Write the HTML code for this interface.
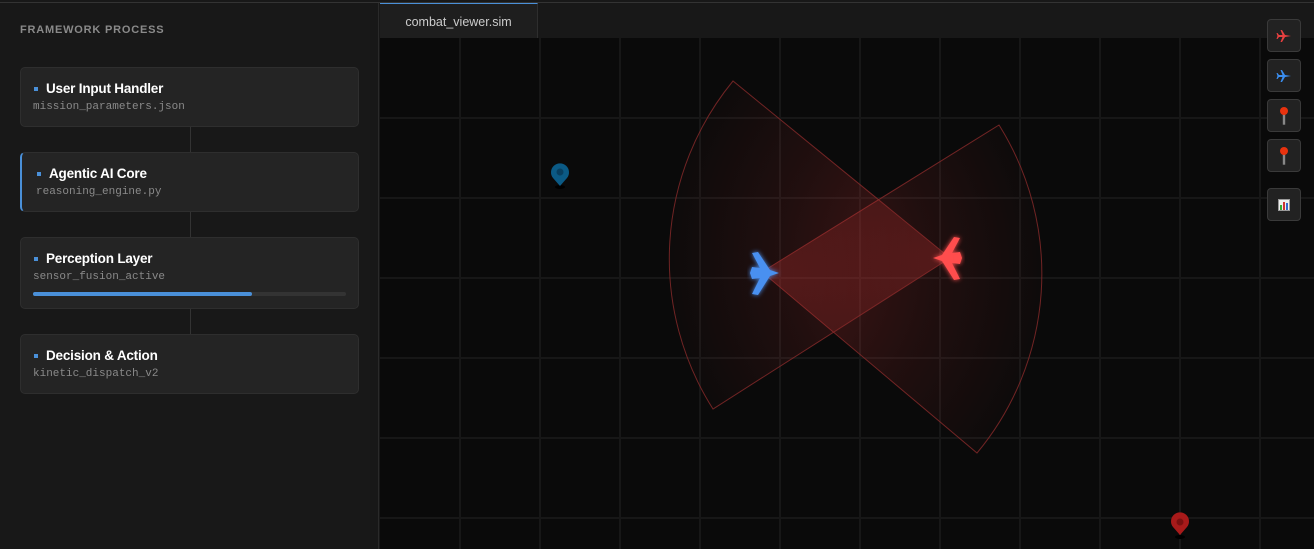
<!DOCTYPE html>
<html><head><meta charset="utf-8"><style>
*{margin:0;padding:0;box-sizing:border-box}
body{width:1314px;height:549px;background:#181818;font-family:"Liberation Sans",sans-serif;overflow:hidden;position:relative}
.top{position:absolute;left:0;top:0;width:1314px;height:3px;background:#181818;border-bottom:1px solid #333}
.side{position:absolute;left:0;top:3px;width:379px;height:546px;background:#181818;border-right:1px solid #2a2a2a}
.h{position:absolute;left:20px;top:21px;font-size:11px;font-weight:bold;letter-spacing:0.8px;color:#8a8a8a}
.card{position:absolute;left:20px;width:339px;background:#242424;border:1px solid #2e2e2e;border-radius:5px}
.card .t{position:absolute;left:25px;top:13px;font-size:13.5px;font-weight:bold;color:#fff;letter-spacing:-0.2px}
.card .t:before{content:"";position:absolute;left:-12px;top:6px;width:4px;height:4px;background:#4a90d9}
.card .s{position:absolute;left:12px;top:33px;font-family:"Liberation Mono",monospace;font-size:11px;color:#8a8a8a}
.conn{position:absolute;left:190px;width:1px;background:#333}
.map{position:absolute;left:380px;top:38px;width:934px;height:511px;background:#0a0a0a}
.tabbar{position:absolute;left:380px;top:3px;width:934px;height:35px;background:#181818}
.tab{position:absolute;left:380px;top:3px;width:158px;height:35px;background:#1e1e1e;border-top:1px solid #4a90d9;border-right:1px solid #2e2e2e;color:#ccc;font-size:12.5px;text-align:center;line-height:36px}
.btn{position:absolute;left:1267px;width:34px;height:33px;background:#222;border:1px solid #3a3a3a;border-radius:4px;display:flex;align-items:center;justify-content:center}
</style></head><body>
<div class="top"></div>
<div class="side">
<div class="h">FRAMEWORK PROCESS</div>
</div>
<div class="card" style="top:67px;height:60px"><div class="t">User Input Handler</div><div class="s">mission_parameters.json</div></div>
<div class="conn" style="top:127px;height:25px"></div>
<div class="card" style="top:152px;height:60px;border-left:2px solid #4a90d9"><div class="t" style="left:27px">Agentic AI Core</div><div class="s" style="left:14px">reasoning_engine.py</div></div>
<div class="conn" style="top:212px;height:25px"></div>
<div class="card" style="top:237px;height:72px"><div class="t">Perception Layer</div><div class="s">sensor_fusion_active</div>
<div style="position:absolute;left:12px;top:54px;width:313px;height:4px;background:#333;border-radius:2px"><div style="width:70%;height:4px;background:#4a90d9;border-radius:2px"></div></div></div>
<div class="conn" style="top:309px;height:25px"></div>
<div class="card" style="top:334px;height:60px"><div class="t">Decision &amp; Action</div><div class="s">kinetic_dispatch_v2</div></div>

<div class="tabbar"></div>
<div class="tab">combat_viewer.sim</div>
<div class="map"></div>
<svg style="position:absolute;left:0;top:0" width="1314" height="549">
<defs>
<radialGradient id="gb" gradientUnits="userSpaceOnUse" cx="762" cy="272" r="280"><stop offset="0" stop-color="#c83232" stop-opacity="0.32"/><stop offset="0.6" stop-color="#c83232" stop-opacity="0.12"/><stop offset="1" stop-color="#c83232" stop-opacity="0.02"/></radialGradient>
<radialGradient id="gr" gradientUnits="userSpaceOnUse" cx="950" cy="258" r="280"><stop offset="0" stop-color="#c83232" stop-opacity="0.32"/><stop offset="0.6" stop-color="#c83232" stop-opacity="0.12"/><stop offset="1" stop-color="#c83232" stop-opacity="0.02"/></radialGradient>
<filter id="gl"><feGaussianBlur stdDeviation="2.5" result="b"/><feMerge><feMergeNode in="b"/><feMergeNode in="SourceGraphic"/></feMerge></filter>
</defs>
<g stroke="#171717" stroke-width="2">
<line x1="460" y1="38" x2="460" y2="549"/><line x1="540" y1="38" x2="540" y2="549"/><line x1="620" y1="38" x2="620" y2="549"/><line x1="700" y1="38" x2="700" y2="549"/><line x1="780" y1="38" x2="780" y2="549"/><line x1="860" y1="38" x2="860" y2="549"/><line x1="940" y1="38" x2="940" y2="549"/><line x1="1020" y1="38" x2="1020" y2="549"/><line x1="1100" y1="38" x2="1100" y2="549"/><line x1="1180" y1="38" x2="1180" y2="549"/><line x1="1260" y1="38" x2="1260" y2="549"/>
<line x1="380" y1="118" x2="1314" y2="118"/><line x1="380" y1="198" x2="1314" y2="198"/><line x1="380" y1="278" x2="1314" y2="278"/><line x1="380" y1="358" x2="1314" y2="358"/><line x1="380" y1="438" x2="1314" y2="438"/><line x1="380" y1="518" x2="1314" y2="518"/>
</g>
<path d="M762 272 L999 125 A280 280 0 0 1 977 453 Z" fill="url(#gb)" stroke="#8a2a2a" stroke-opacity="0.8" stroke-width="1"/>
<path d="M950 258 L733 81 A280 280 0 0 0 713 409 Z" fill="url(#gr)" stroke="#8a2a2a" stroke-opacity="0.8" stroke-width="1"/>
<g filter="url(#gl)" fill="#4a90f0">
<path d="M779 273 L770 270 L758 252 L752 253 L760 268 L752 267 L750 273 L752 279 L760 278 L752 294 L758 295 L770 276 Z"/>
<circle cx="755" cy="273" r="4"/>
</g>
<g filter="url(#gl)" fill="#ff4d4d">
<path d="M933 258 L942 255 L954 237 L960 238 L952 253 L960 252 L962 258 L960 264 L952 263 L960 279 L954 280 L942 261 Z"/>
<circle cx="957" cy="258" r="4"/>
</g>
<ellipse cx="560" cy="187" rx="5" ry="2" fill="#000"/>
<path d="M560 186 L553 178 A9 9 0 1 1 567 178 Z" fill="#0b5a85"/><circle cx="560" cy="172" r="3.5" fill="#083f60"/>
<ellipse cx="1180" cy="537" rx="5" ry="2" fill="#000"/>
<path d="M1180 535 L1173 527 A9 9 0 1 1 1187 527 Z" fill="#a81a1a"/><circle cx="1180" cy="522" r="3.5" fill="#7a1010"/>
</svg>
<div class="btn" style="top:19px"><svg width="16" height="16" viewBox="0 0 16 16"><path d="M15 8 L9 7 L6 2 L4.5 2 L6.5 7 L3 7 L1.5 5 L0.5 5 L1.5 8 L0.5 11 L1.5 11 L3 9 L6.5 9 L4.5 14 L6 14 L9 9 Z" fill="#e84040"/></svg></div>
<div class="btn" style="top:59px"><svg width="16" height="16" viewBox="0 0 16 16"><path d="M15 8 L9 7 L6 2 L4.5 2 L6.5 7 L3 7 L1.5 5 L0.5 5 L1.5 8 L0.5 11 L1.5 11 L3 9 L6.5 9 L4.5 14 L6 14 L9 9 Z" fill="#3a8ef0"/></svg></div>
<div class="btn" style="top:99px"><svg width="10" height="20" viewBox="0 0 10 20"><rect x="3.5" y="6" width="3" height="13" fill="#888" stroke="#222" stroke-width="0.6"/><circle cx="5" cy="5" r="4" fill="#e8320e"/></svg></div>
<div class="btn" style="top:139px"><svg width="10" height="20" viewBox="0 0 10 20"><rect x="3.5" y="6" width="3" height="13" fill="#888" stroke="#222" stroke-width="0.6"/><circle cx="5" cy="5" r="4" fill="#e8320e"/></svg></div>
<div class="btn" style="top:188px"><svg width="12" height="12" viewBox="0 0 12 12"><rect x="0.5" y="0.5" width="11" height="11" fill="#eee" stroke="#999"/><rect x="2" y="6" width="2" height="5" fill="#3a3"/><rect x="5" y="3" width="2" height="8" fill="#c33"/><rect x="8" y="4" width="2" height="7" fill="#36c"/></svg></div>
</body></html>
